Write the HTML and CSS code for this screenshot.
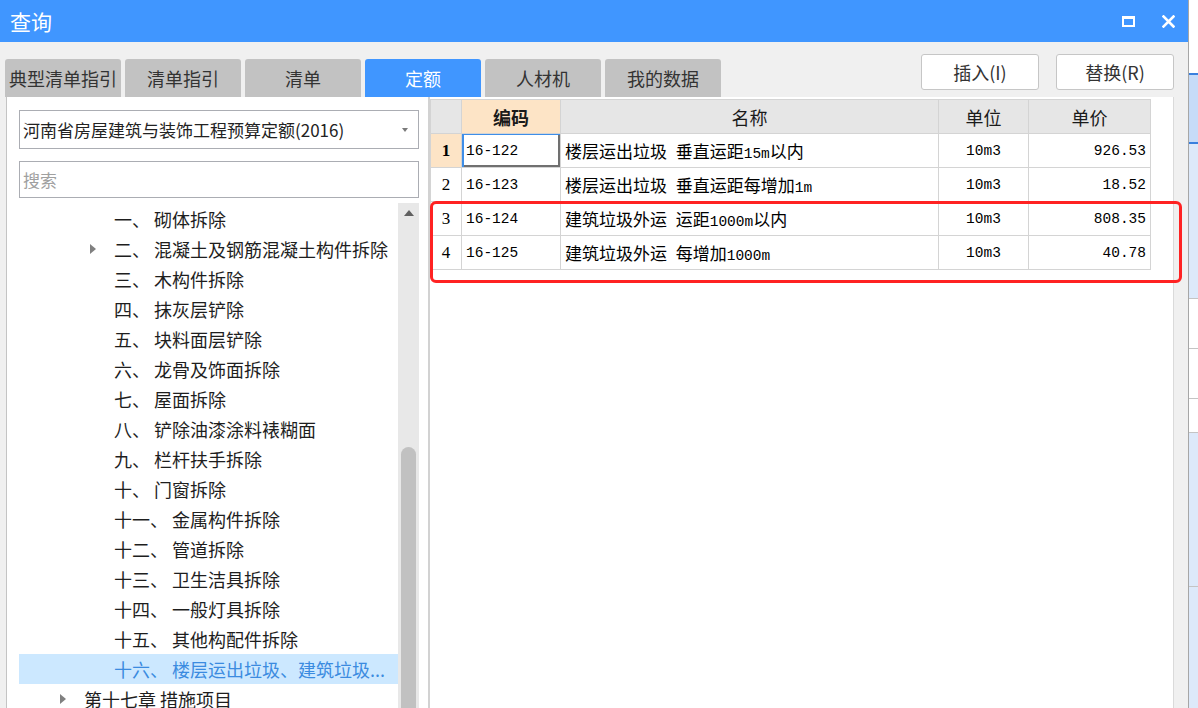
FILE: index.html
```html
<!DOCTYPE html>
<html lang="zh-CN">
<head>
<meta charset="utf-8">
<title>查询</title>
<link rel="stylesheet" href="styles.css">
</head>
<body>
<div class="screen">
  <div class="dialog">
    <div class="titlebar">
      <span class="title">查询</span>
      <div class="win-ctrls">
        <span class="ctrl-restore"></span>
        <svg class="ctrl-close" width="13" height="13" viewBox="0 0 13 13"><path d="M1.5 1.5 L11.5 11.5 M11.5 1.5 L1.5 11.5" stroke="#fff" stroke-width="2.6" stroke-linecap="square"/></svg>
      </div>
    </div>
    <div class="toolbar">
      <div class="tabs">
        <div class="tab">典型清单指引</div>
        <div class="tab">清单指引</div>
        <div class="tab">清单</div>
        <div class="tab active">定额</div>
        <div class="tab">人材机</div>
        <div class="tab">我的数据</div>
      </div>
      <div class="actions">
        <button class="btn">插入(I)</button>
        <button class="btn">替换(R)</button>
      </div>
    </div>
    <div class="content">
      <div class="left-panel">
        <div class="select"><span>河南省房屋建筑与装饰工程预算定额(2016)</span><span class="caret"></span></div>
        <div class="search">搜索</div>
        <div class="tree-wrap">
          <ul class="tree">
            <li class="node l2"><span class="twisty"></span>一、 砌体拆除</li>
            <li class="node l2"><span class="twisty closed"></span>二、 混凝土及钢筋混凝土构件拆除</li>
            <li class="node l2"><span class="twisty"></span>三、 木构件拆除</li>
            <li class="node l2"><span class="twisty"></span>四、 抹灰层铲除</li>
            <li class="node l2"><span class="twisty"></span>五、 块料面层铲除</li>
            <li class="node l2"><span class="twisty"></span>六、 龙骨及饰面拆除</li>
            <li class="node l2"><span class="twisty"></span>七、 屋面拆除</li>
            <li class="node l2"><span class="twisty"></span>八、 铲除油漆涂料裱糊面</li>
            <li class="node l2"><span class="twisty"></span>九、 栏杆扶手拆除</li>
            <li class="node l2"><span class="twisty"></span>十、 门窗拆除</li>
            <li class="node l2"><span class="twisty"></span>十一、 金属构件拆除</li>
            <li class="node l2"><span class="twisty"></span>十二、 管道拆除</li>
            <li class="node l2"><span class="twisty"></span>十三、 卫生洁具拆除</li>
            <li class="node l2"><span class="twisty"></span>十四、 一般灯具拆除</li>
            <li class="node l2"><span class="twisty"></span>十五、 其他构配件拆除</li>
            <li class="node l2 selected"><span class="twisty"></span>十六、 楼层运出垃圾、建筑垃圾...</li>
            <li class="node l1"><span class="twisty closed"></span>第十七章 措施项目</li>
          </ul>
          <div class="vscroll">
            <span class="up"></span>
            <span class="thumb"></span>
          </div>
        </div>
      </div>
      <div class="divider"></div>
      <div class="right-panel">
        <table class="grid">
          <colgroup>
            <col class="w-no"><col class="w-code"><col class="w-name"><col class="w-unit"><col class="w-price">
          </colgroup>
          <thead>
            <tr>
              <th></th>
              <th class="th-code">编码</th>
              <th>名称</th>
              <th>单位</th>
              <th>单价</th>
            </tr>
          </thead>
          <tbody>
            <tr class="r1">
              <td class="c-no">1</td>
              <td class="c-code focus">16-122</td>
              <td class="c-name">楼层运出垃圾<span class="n"> </span>垂直运距<span class="n">15m</span>以内</td>
              <td class="c-unit">10m3</td>
              <td class="c-price">926.53</td>
            </tr>
            <tr>
              <td class="c-no">2</td>
              <td class="c-code">16-123</td>
              <td class="c-name">楼层运出垃圾<span class="n"> </span>垂直运距每增加<span class="n">1m</span></td>
              <td class="c-unit">10m3</td>
              <td class="c-price">18.52</td>
            </tr>
            <tr>
              <td class="c-no">3</td>
              <td class="c-code">16-124</td>
              <td class="c-name">建筑垃圾外运<span class="n"> </span>运距<span class="n">1000m</span>以内</td>
              <td class="c-unit">10m3</td>
              <td class="c-price">808.35</td>
            </tr>
            <tr>
              <td class="c-no">4</td>
              <td class="c-code">16-125</td>
              <td class="c-name">建筑垃圾外运<span class="n"> </span>每增加<span class="n">1000m</span></td>
              <td class="c-unit">10m3</td>
              <td class="c-price">40.78</td>
            </tr>
          </tbody>
        </table>
        <div class="mark"></div>
      </div>
    </div>
  </div>
  <div class="bg-strip">
    <div class="bs-white"></div>
    <div class="bs-sel"></div>
    <div class="bs-blue"></div>
    <div class="bs-row h50"></div>
    <div class="bs-row h50"></div>
    <div class="bs-row h34"></div>
    <div class="bs-blue2 h154"></div>
    <div class="bs-blue2 grow"></div>
  </div>
</div>
</body>
</html>
```

FILE: styles.css
```css
* { box-sizing: border-box; margin: 0; padding: 0; }
html, body { width: 1198px; height: 708px; overflow: hidden; }
body {
  font-family: "Noto Sans CJK SC", "Microsoft YaHei", sans-serif;
  background: #fff;
  color: #222;
}
.screen { display: flex; height: 708px; }

.dialog {
  width: 1189px;
  height: 708px;
  background: #f0f0f0;
  border-right: 1px solid #a6a6a6;
  display: flex;
  flex-direction: column;
}

.titlebar {
  height: 42px;
  flex: none;
  background: #4096ff;
  display: flex;
  align-items: center;
  justify-content: space-between;
  padding: 0 13px 0 10px;
}
.title { color: #fff; font-size: 21px; line-height: 1; }
.win-ctrls { display: flex; align-items: center; gap: 27px; }
.ctrl-restore {
  display: block;
  width: 13px;
  height: 11px;
  border: 2px solid #fff;
  border-top-width: 3px;
}
.ctrl-close { display: block; }

.toolbar {
  height: 55px;
  flex: none;
  display: flex;
  justify-content: space-between;
  padding: 0 14px 0 5px;
}
.tabs { display: flex; gap: 4px; align-self: flex-end; }
.tab {
  width: 116px;
  height: 38px;
  background: #c2c2c2;
  border-radius: 3px 3px 0 0;
  font-size: 18px;
  color: #333;
  display: flex;
  align-items: center;
  justify-content: center;
  white-space: nowrap;
}
.tab.active { background: #4096ff; color: #fff; }
.actions { display: flex; gap: 17px; padding-top: 12px; }
.btn {
  width: 118px;
  height: 36px;
  background: #fff;
  border: 1px solid #c6c6c6;
  border-radius: 3px;
  font-family: inherit;
  font-size: 18px;
  color: #333;
}

.content {
  flex: 1;
  min-height: 0;
  display: flex;
  margin: 0 14px 0 6px;
}
.left-panel {
  width: 422px;
  flex: none;
  background: #fff;
  border-left: 1px solid #c4c4c4;
  padding: 13px 9px 0 12px;
  display: flex;
  flex-direction: column;
}
.select {
  height: 39px;
  flex: none;
  border: 1px solid #abadb3;
  display: flex;
  align-items: center;
  justify-content: space-between;
  padding: 0 10px 0 3px;
  font-size: 17px;
  color: #222;
}
.caret {
  width: 0;
  height: 0;
  border-top: 4px solid #7a7a7a;
  border-left: 3.5px solid transparent;
  border-right: 3.5px solid transparent;
}
.search {
  margin-top: 12px;
  height: 37px;
  flex: none;
  border: 1px solid #abadb3;
  padding-left: 3px;
  font-size: 17px;
  color: #a0a0a0;
  display: flex;
  align-items: center;
}
.tree-wrap {
  margin-top: 5px;
  flex: 1;
  min-height: 0;
  display: flex;
  overflow: hidden;
}
.tree { list-style: none; flex: 1; padding-top: 1px; }
.node {
  height: 30px;
  display: flex;
  align-items: center;
  font-size: 18px;
  color: #1e1e1e;
  white-space: nowrap;
}
.node.l1 { padding-left: 41px; }
.node.l2 { padding-left: 71px; }
.twisty { width: 24px; flex: none; display: flex; align-items: center; }
.twisty.closed::before {
  content: "";
  width: 0;
  height: 0;
  border-left: 6px solid #808080;
  border-top: 5px solid transparent;
  border-bottom: 5px solid transparent;
}
.node.selected { background: #cce8ff; color: #3b8be0; }

.vscroll {
  width: 21px;
  flex: none;
  background: #e8e8e8;
  display: flex;
  flex-direction: column;
  align-items: center;
}
.vscroll .up {
  height: 20px;
  display: flex;
  align-items: center;
}
.vscroll .up::before {
  content: "";
  width: 0;
  height: 0;
  border-bottom: 6px solid #606060;
  border-left: 5.5px solid transparent;
  border-right: 5.5px solid transparent;
}
.thumb {
  width: 15px;
  flex: 1;
  margin-top: 224px;
  background: #c1c1c1;
  border-radius: 8px 8px 0 0;
}

.divider { width: 2px; flex: none; background: #d2d2d2; }

.right-panel {
  flex: 1;
  background: #fff;
  border-right: 1px solid #dadada;
  position: relative;
  padding-top: 2px;
}
.grid {
  border-collapse: collapse;
  table-layout: fixed;
  width: 720px;
}
.w-no { width: 31px; }
.w-code { width: 99px; }
.w-name { width: 378px; }
.w-unit { width: 90px; }
.w-price { width: 122px; }
.grid tr { height: 34px; }
.grid th, .grid td {
  border: 1px solid #d4d4d4;
  padding: 0;
  white-space: nowrap;
  overflow: hidden;
}
.grid th {
  background: #e6e6e6;
  font-weight: normal;
  font-size: 18px;
  color: #1a1a1a;
}
.grid th.th-code { background: #fde4c6; font-weight: bold; }
.grid td { font-size: 17px; color: #000; }
.c-no {
  text-align: center;
  font-family: "Liberation Serif", serif;
  font-size: 17px;
}
.r1 .c-no { background: #fde4c6; font-weight: bold; }
.c-code {
  padding-left: 4px !important;
  font-family: "Liberation Mono", monospace;
  font-size: 14.5px !important;
}
.c-name { padding-left: 4px !important; }
.n { font-family: "Liberation Mono", monospace; font-size: 14.5px; white-space: pre; }
.c-unit {
  text-align: center;
  font-family: "Liberation Mono", monospace;
  font-size: 14.5px !important;
}
.c-price {
  text-align: right;
  padding-right: 4px !important;
  font-family: "Liberation Mono", monospace;
  font-size: 14.5px !important;
}
.focus { box-shadow: inset 2px 1px 0 #3e8ee8, inset -2px -2px 0 #707070; }

.mark {
  position: absolute;
  left: 0;
  top: 104px;
  width: 752px;
  height: 82px;
  border: 3px solid #ff2222;
  border-radius: 6px;
}

.bg-strip { width: 9px; flex: none; display: flex; flex-direction: column; }
.bs-white { height: 73px; background: #fff; }
.bs-sel { height: 71px; background: #c6dbf8; border-top: 2px solid #3a80de; border-bottom: 2px solid #3a80de; }
.bs-blue { height: 154px; background: #dde9fa; }
.bs-row { background: #fff; border-top: 1px solid #c4c4c4; }
.bs-blue2 { background: #dde9fa; border-top: 1px solid #c4c4c4; }
.h50 { height: 50px; }
.h34 { height: 34px; }
.h154 { height: 154px; }
.grow { flex: 1; }
```
